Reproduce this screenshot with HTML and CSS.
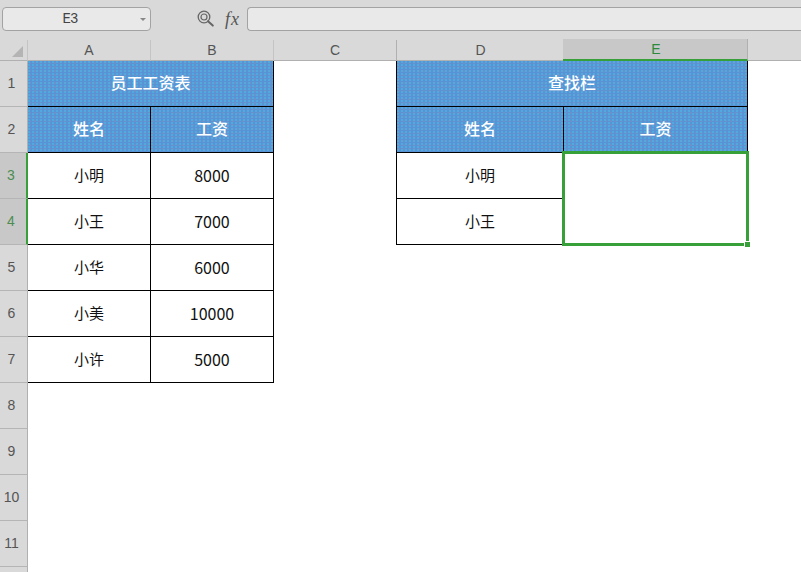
FILE: index.html
```html
<!DOCTYPE html>
<html lang="zh">
<head>
<meta charset="utf-8">
<title>员工工资表</title>
<link rel="stylesheet" href="styles.css">
</head>
<body>
<div class="app">
  <div class="toolbar">
    <div class="namebox"><span class="nametext">E3</span><span class="caret"></span></div>
    <svg class="zoom" viewBox="0 0 18 18" width="18" height="18" aria-hidden="true">
      <circle cx="7" cy="7" r="5.8" fill="none" stroke="#666" stroke-width="1.3"/>
      <circle cx="7" cy="7" r="3" fill="none" stroke="#666" stroke-width="1.2"/>
      <path d="M11 11.2l4.8 4.4" stroke="#666" stroke-width="2" stroke-linecap="round"/>
    </svg>
    <span class="fx">fx</span>
    <div class="formula"></div>
  </div>
  <div class="sheet">
    <div class="corner"><span class="tri"></span></div>
    <div class="colhead">A</div>
    <div class="colhead">B</div>
    <div class="colhead plain">C</div>
    <div class="colhead ruled">D</div>
    <div class="colhead active">E</div>
    <div class="colrest"></div>

    <div class="rowhead">1</div>
    <div class="cell title span2">员工工资表</div>
    <div class="blank"></div>
    <div class="cell title span2 open">查找栏</div>
    <div class="blank"></div>

    <div class="rowhead">2</div>
    <div class="cell head">姓名</div>
    <div class="cell head">工资</div>
    <div class="blank"></div>
    <div class="cell head open">姓名</div>
    <div class="cell head">工资</div>
    <div class="blank"></div>

    <div class="rowhead sel">3</div>
    <div class="cell">小明</div>
    <div class="cell num">8000</div>
    <div class="blank"></div>
    <div class="cell open">小明</div>
    <div class="selection"><span class="handle"></span></div>
    <div class="blank"></div>

    <div class="rowhead sel">4</div>
    <div class="cell">小王</div>
    <div class="cell num">7000</div>
    <div class="blank"></div>
    <div class="cell open">小王</div>
    <div class="blank"></div>

    <div class="rowhead">5</div>
    <div class="cell">小华</div>
    <div class="cell num">6000</div>
    <div class="blank wide"></div>

    <div class="rowhead">6</div>
    <div class="cell">小美</div>
    <div class="cell num">10000</div>
    <div class="blank wide"></div>

    <div class="rowhead">7</div>
    <div class="cell">小许</div>
    <div class="cell num">5000</div>
    <div class="blank wide"></div>

    <div class="rowhead">8</div>
    <div class="blank full"></div>
    <div class="rowhead">9</div>
    <div class="blank full"></div>
    <div class="rowhead">10</div>
    <div class="blank full"></div>
    <div class="rowhead">11</div>
    <div class="blank full"></div>
    <div class="rowhead"></div>
    <div class="blank full"></div>
  </div>
</div>
</body>
</html>
```
FILE: styles.css
```css
* { box-sizing: border-box; }
html, body { margin: 0; padding: 0; }
body {
  width: 801px;
  height: 572px;
  overflow: hidden;
  background: #fff;
  font-family: "Liberation Sans", "Noto Sans CJK SC", sans-serif;
}
.app { display: flex; flex-direction: column; height: 572px; overflow: hidden; }

.toolbar {
  height: 40px;
  flex: none;
  display: flex;
  align-items: center;
  padding: 0 0 2px 2px;
  background: #d9d9d9;
}
.namebox {
  width: 149px;
  height: 24px;
  display: flex;
  align-items: center;
  justify-content: center;
  padding-right: 13px;
  position: relative;
  background: #e9e9e9;
  border: 1px solid #a3a3a3;
  border-radius: 4px;
}
.nametext {
  font-family: "Liberation Mono", monospace;
  font-size: 14px;
  letter-spacing: -1px;
  color: #444;
}
.caret {
  position: absolute;
  right: 4px;
  top: 10px;
  border-left: 3px solid transparent;
  border-right: 3px solid transparent;
  border-top: 3px solid #888;
}
.zoom { margin-left: 46px; flex: none; }
.fx {
  margin-left: 10px;
  width: 22px;
  font-family: "Liberation Serif", serif;
  font-style: italic;
  font-size: 18px;
  letter-spacing: 1px;
  color: #555;
}
.formula {
  flex: 1;
  height: 24px;
  background: #e9e9e9;
  border: 1px solid #a3a3a3;
  border-right: 0;
  border-radius: 4px 0 0 4px;
}

.sheet {
  flex: none;
  display: grid;
  grid-template-columns: 28px 123px 123px 123px 167px 184px 53px;
  grid-template-rows: 21px repeat(12, 46px);
  font-size: 15px;
  color: #111;
}
.corner {
  background: #d9d9d9;
  border-right: 1px solid #c4c4c4;
  border-bottom: 1px solid #b0b0b0;
  position: relative;
}
.tri {
  position: absolute;
  right: 4px;
  bottom: 3px;
  border-left: 11px solid transparent;
  border-bottom: 11px solid #b4b4b4;
}
.colhead {
  display: flex;
  align-items: center;
  justify-content: center;
  background: #d9d9d9;
  border-right: 1px solid #c4c4c4;
  border-bottom: 1px solid #b0b0b0;
  color: #555;
  font-size: 14px;
}
.colhead.plain { border-right: 1px solid #b0b0b0; }
.colhead.ruled { border-right: 0; }
.colhead.active {
  background: #c8c8c8;
  color: #2c8a3c;
  margin: -1px 0 0 -1px;
  padding-left: 2px;
  border-right: 1px solid #b0b0b0;
  border-bottom: 2px solid #38a038;
}
.colrest { background: #d9d9d9; border-bottom: 1px solid #b0b0b0; }

.rowhead {
  display: flex;
  align-items: center;
  justify-content: center;
  padding: 0 4px 2px 0;
  background: #d9d9d9;
  border-right: 1px solid #b0b0b0;
  border-bottom: 1px solid #b5b5b5;
  color: #555;
  font-size: 14px;
}
.rowhead.sel {
  background: #c8c8c8;
  color: #4e8c52;
  border-right: 2px solid #38a038;
}

.cell {
  display: flex;
  align-items: center;
  justify-content: center;
  padding-bottom: 2px;
  border-right: 1px solid #000;
  border-bottom: 1px solid #000;
  font-family: "Noto Sans CJK SC", "Liberation Sans", sans-serif;
  background: #fff;
}
.cell.num { font-size: 16px; }
.cell.open { border-left: 1px solid #000; margin-left: -1px; }
.span2 { grid-column: span 2; }
.title, .head {
  padding-bottom: 4px;
  color: #fff;
  font-size: 16px;
  font-weight: 500;
  background-color: #5a92d6;
  background-image:
    radial-gradient(circle at 1px 1px, rgba(70, 190, 230, 0.55) 0.7px, transparent 1px),
    radial-gradient(circle at 2px 2px, rgba(120, 145, 190, 0.6) 0.8px, transparent 1px);
  background-size: 4px 3px, 5px 4px;
}
.blank { background: #fff; }
.blank.wide { grid-column: span 4; }
.blank.full { grid-column: span 6; }

.selection {
  grid-column: 6;
  grid-row: span 2;
  margin: -2px -1px -1px -2px;
  border: 3px solid #38a038;
  background: #fff;
  position: relative;
  z-index: 1;
}
.handle {
  position: absolute;
  right: -5px;
  bottom: -5px;
  width: 7px;
  height: 7px;
  background: #38a038;
  border: 1px solid #fff;
}
```
